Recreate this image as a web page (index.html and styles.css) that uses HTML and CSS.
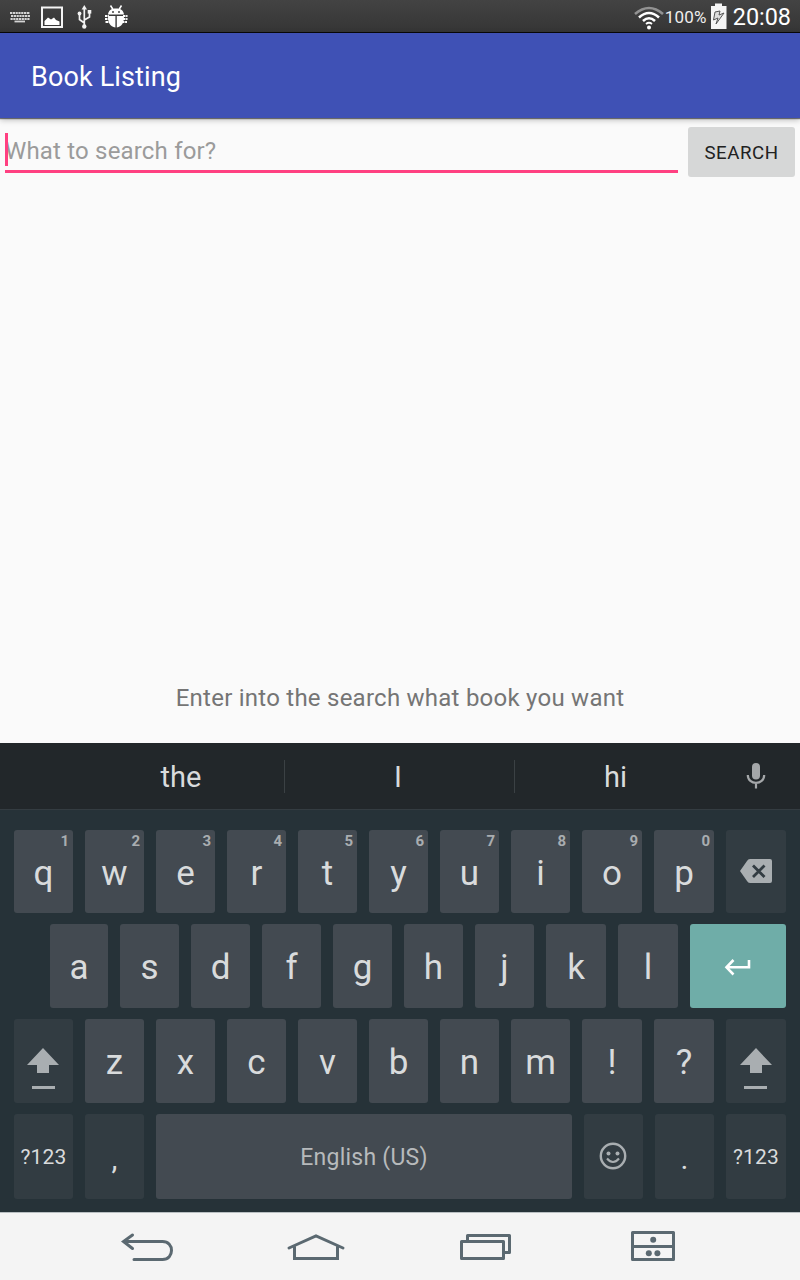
FILE: index.html
```
<!DOCTYPE html>
<html lang="en">
<head>
<meta charset="utf-8">
<title>Book Listing</title>
<link rel="stylesheet" href="styles.css">
</head>
<body>
<div class="screen">
  <header class="status">
    <svg class="status-icons" width="130" height="32" viewBox="0 0 130 32">
      <g fill="none" stroke="#d4d4d4">
        <path stroke-width="2" stroke-dasharray="2.200 .6" d="M10 13H30M11 16H30M10.500 19H29.500"/>
        <path stroke-width="1.800" d="M14.500 21.500H25"/>
      </g>
      <path fill="none" stroke="#f4f4f4" stroke-width="2" d="M42 7.500H62V27H42Z"/>
      <path fill="#fff" d="M44.500 25V21L48 17.500L51 19.500L54 17.500L56 20L59.500 21.500V25Z"/>
      <g fill="none" stroke="#f2f2f2" stroke-width="1.700">
        <path d="M84.300 8V27M84.300 23L79.500 19.500V14M84.300 20L89.500 17V12"/>
      </g>
      <g fill="#f2f2f2"><path d="M84.300 5L87 9.500H81.600Z"/><circle cx="84.300" cy="26.500" r="2.200"/><circle cx="79.500" cy="13.500" r="1.900"/><path d="M87.700 10H91.300V13.600H87.700Z"/></g>
      <path fill="#fff" d="M108 14.500C108.500 10.500 111 8.500 116 8.500S123.500 10.500 124 14.500ZM108 16H115.400V27.500C110 26.500 108 23 108 16ZM116.800 16H124C124 23 122 26.500 116.800 27.500Z"/>
      <path fill="none" stroke="#fff" stroke-width="1.500" d="M110.500 5.500L113 9.500M121.500 5.500L119 9.500"/>
      <path fill="none" stroke="#fff" stroke-width="1.800" stroke-dasharray="2.500 .6" d="M105 16H109M105 19H109M105.500 22H110M123 16H127.500M123 19H127.500M122 22H127"/>
      <g fill="#444"><circle cx="113" cy="12" r="1"/><circle cx="119" cy="12" r="1"/></g>
    </svg>
    <div class="status-right">
      <svg width="30" height="32" viewBox="0 0 30 32" fill="none" stroke="#fff" stroke-width="2.600">
        <path stroke="#929292" d="M1 14Q15 2 29 14"/>
        <path d="M5 17.500Q15 8.500 25 17.500"/><path d="M9 21Q15 15.500 21 21"/>
        <path d="M12 24Q15 21.500 18 24" stroke-width="1.800"/><circle cx="15" cy="27.500" r="2" fill="#fff" stroke="none"/>
      </svg>
      <span class="percent">100%</span>
      <svg class="battery" width="18" height="32" viewBox="0 0 18 32">
        <path fill="#f4f4f4" d="M5 3.500H12V6H16.500V29H1V6H5Z"/>
        <path fill="#ddd" stroke="#555" stroke-width="1" d="M5 12L10 11L9 15L14 13L6 24L8 18L3.500 20Z"/>
      </svg>
      <span class="clock">20:08</span>
    </div>
  </header>
  <div class="appbar"><h1 class="title">Book Listing</h1></div>
  <main class="content">
    <div class="search-row">
      <div class="field"><span class="hint">What to search for?</span><i class="caret"></i></div>
      <button class="search"><span class="search-label">SEARCH</span></button>
    </div>
    <p class="message"><span class="message-text">Enter into the search what book you want</span></p>
  </main>
  <section class="keyboard">
    <div class="suggest">
      <span class="word first">the</span><span class="word middle">I</span><span class="word last">hi</span>
      <span class="mic"><svg width="20" height="28" viewBox="0 0 20 28"><rect x="6" y="1" width="8" height="16.500" rx="4" fill="#a4a7a9"/><path fill="none" stroke="#a4a7a9" stroke-width="2.200" d="M1.800 13C1.800 23.500 18.200 23.500 18.200 13M10 21V26.500"/></svg></span>
    </div>
    <div class="keys r1">
      <div class="key">q<b>1</b></div><div class="key">w<b>2</b></div><div class="key">e<b>3</b></div><div class="key">r<b>4</b></div><div class="key">t<b>5</b></div><div class="key">y<b>6</b></div><div class="key">u<b>7</b></div><div class="key">i<b>8</b></div><div class="key">o<b>9</b></div><div class="key">p<b>0</b></div>
      <div class="key dim icon"><svg width="60" height="83" viewBox="0 0 60 83"><path fill="#a9aeb1" d="M14 41L21 31Q22 29 24 29H44Q46 29 46 31V51Q46 53 44 53H24Q22 53 21 51Z"/><path stroke="#323c42" stroke-width="2.800" d="M27 35.500L38.500 47M38.500 35.500L27 47"/></svg></div>
    </div>
    <div class="keys r2">
      <div class="key">a</div><div class="key">s</div><div class="key">d</div><div class="key">f</div><div class="key">g</div><div class="key">h</div><div class="key">j</div><div class="key">k</div><div class="key">l</div>
      <div class="key enter icon"><svg width="96" height="84" viewBox="0 0 96 84"><path fill="none" stroke="#fff" stroke-width="2.600" d="M59 36V43.300H37M43.500 36L36.500 43.300L43.500 50.500"/></svg></div>
    </div>
    <div class="keys r3">
      <div class="key dim icon"><svg width="59" height="84" viewBox="0 0 59 84"><path fill="#a9aeb1" d="M29 29L45 46H35V54H23V46H13ZM18 67H41V70H18Z"/></svg></div>
      <div class="key">z</div><div class="key">x</div><div class="key">c</div><div class="key">v</div><div class="key">b</div><div class="key">n</div><div class="key">m</div><div class="key">!</div><div class="key">?</div>
      <div class="key dim icon"><svg width="60" height="84" viewBox="0 0 60 84"><path fill="#a9aeb1" d="M30 29L46 46H36V54H24V46H14ZM18 67H41V70H18Z"/></svg></div>
    </div>
    <div class="keys r4">
      <div class="key dim mode">?123</div><div class="key dim punct">,</div>
      <div class="key space">English (US)</div>
      <div class="key dim icon"><svg width="59" height="85" viewBox="0 0 59 85"><circle cx="29" cy="42" r="12.200" fill="none" stroke="#a9aeb1" stroke-width="2.400"/><g fill="#a9aeb1"><circle cx="24.500" cy="39.500" r="2"/><circle cx="33.500" cy="39.500" r="2"/></g><path fill="none" stroke="#a9aeb1" stroke-width="2" d="M23 44.500Q29 51.500 35 44.500"/></svg></div>
      <div class="key dim punct">.</div><div class="key dim mode">?123</div>
    </div>
  </section>
  <nav class="navbar">
    <svg width="800" height="66" viewBox="0 2 800 66" fill="none" stroke="#5b6971" stroke-width="3" stroke-linecap="round">
      <path d="M134 48.500H162.500C174.500 48.500 174.500 30.500 162.500 30.500H124M132.500 24L123.500 30.500L132.500 37.500"/>
      <path d="M289 37L316 25L343 37M294.500 36V47.500H337.500V36"/>
      <path stroke-linejoin="round" d="M461.500 30.500H503.500V47.500H461.500ZM467.500 29V24.500H509.500V41.500H505"/>
      <path stroke-linejoin="round" d="M632.500 21.500H673.500V48.500H632.500ZM633 35.500H673"/>
      <g fill="#5b6971" stroke="none"><circle cx="653.200" cy="28.700" r="3"/><circle cx="648.800" cy="42.300" r="3"/><circle cx="657.400" cy="42.300" r="3"/></g>
    </svg>
  </nav>
</div>
</body>
</html>
```
FILE: styles.css
```
* { box-sizing: border-box; }
body { margin: 0; font-family: Roboto, sans-serif; }
svg { display: block; flex: none; }
.screen { width: 800px; height: 1280px; display: flex; flex-direction: column; overflow: hidden; background: #fafafa; }
.status { height: 33px; display: flex; justify-content: space-between; background: linear-gradient(#434343, #353535); border-bottom: 1px solid #080808; color: #fff; }
.status-right { display: flex; align-items: center; padding-right: 9px; }
.percent { font-size: 17px; margin: 2px 3px 0 1px; color: #eee; letter-spacing: .2px; }
.clock { font-size: 23.4px; margin: 1px 0 0 5px; }
.appbar { height: 85px; flex: none; padding: 3px 31px 0; display: flex; align-items: center; background: #3f51b5; box-shadow: 0 1px 1px rgba(0,0,0,.5), 0 2px 6px rgba(0,0,0,.25); position: relative; }
.title { margin: 0; font-weight: 400; font-size: 27px; letter-spacing: .13px; color: #fff; white-space: nowrap; }
.content { height: 625px; flex: none; display: flex; flex-direction: column; justify-content: space-between; }
.search-row { display: flex; padding: 9px 5px 0; gap: 10px; }
.field { position: relative; width: 673px; height: 46px; border-bottom: 3px solid #ff4081; padding-top: 9px; font-size: 24px; letter-spacing: .18px; line-height: 30px; color: #9b9b9b; white-space: nowrap; }
.caret { position: absolute; left: 0; top: 6px; width: 3px; height: 33px; background: #ff4081; }
.search { width: 107px; height: 50px; border: 0; border-radius: 3px; padding: 1px 0 0; background: #d6d7d7; color: #212121; font: 18.667px Roboto, sans-serif; letter-spacing: .55px; }
.message { margin: 0 0 30px; text-align: center; font-size: 24px; letter-spacing: .245px; line-height: 30px; color: #757575; white-space: nowrap; }
.keyboard { height: 469px; flex: none; background: #263238; color: #d9dbdc; display: flex; flex-direction: column; }
.suggest { height: 67px; flex: none; margin-bottom: 20px; display: flex; align-items: center; background: #22272a; border-bottom: 1px solid #343c41; font-size: 29px; }
.word { height: 33px; line-height: 35px; width: 230px; text-align: center; border-right: 1px solid #3b4144; }
.first { width: 285px; padding-left: 78px; }
.middle { padding-right: 3px; }
.last { width: 201px; border: 0; }
.mic { padding-left: 30px; }
.keys { display: grid; column-gap: 12px; margin-left: 14px; margin-bottom: 11px; flex: none; }
.r1, .r3 { grid-template-columns: repeat(8, 59px) repeat(3, 60px); }
.r1 { height: 83px; }
.r2 { height: 84px; margin-left: 50px; grid-template-columns: 58px repeat(6, 59px) repeat(2, 60px) 96px; }
.r3 { height: 84px; }
.r4 { height: 85px; grid-template-columns: 59px 59px 416px 59px 59px 60px; }
.key { position: relative; display: flex; align-items: center; justify-content: center; padding: 4px 0 0; background: #434a51; border-radius: 3px; font-size: 35px; }
.r2 .key, .r3 .key { padding-top: 2px; }
.key b { position: absolute; right: 4px; top: 3px; font-size: 15px; line-height: 17px; color: #a9adb0; }
.dim { background: #323c42; }
.keys .icon { padding: 0; }
.enter { background: #6fada8; }
.mode { font-size: 21px; padding-top: 1px; letter-spacing: .2px; }
.punct { font-size: 30px; padding-top: 4px; }
.space { font-size: 23px; padding-top: 1px; letter-spacing: .25px; color: #b7babc; }
.navbar { height: 68px; flex: none; background: #f4f4f4; border-top: 1px solid #b9bfc2; }
```
